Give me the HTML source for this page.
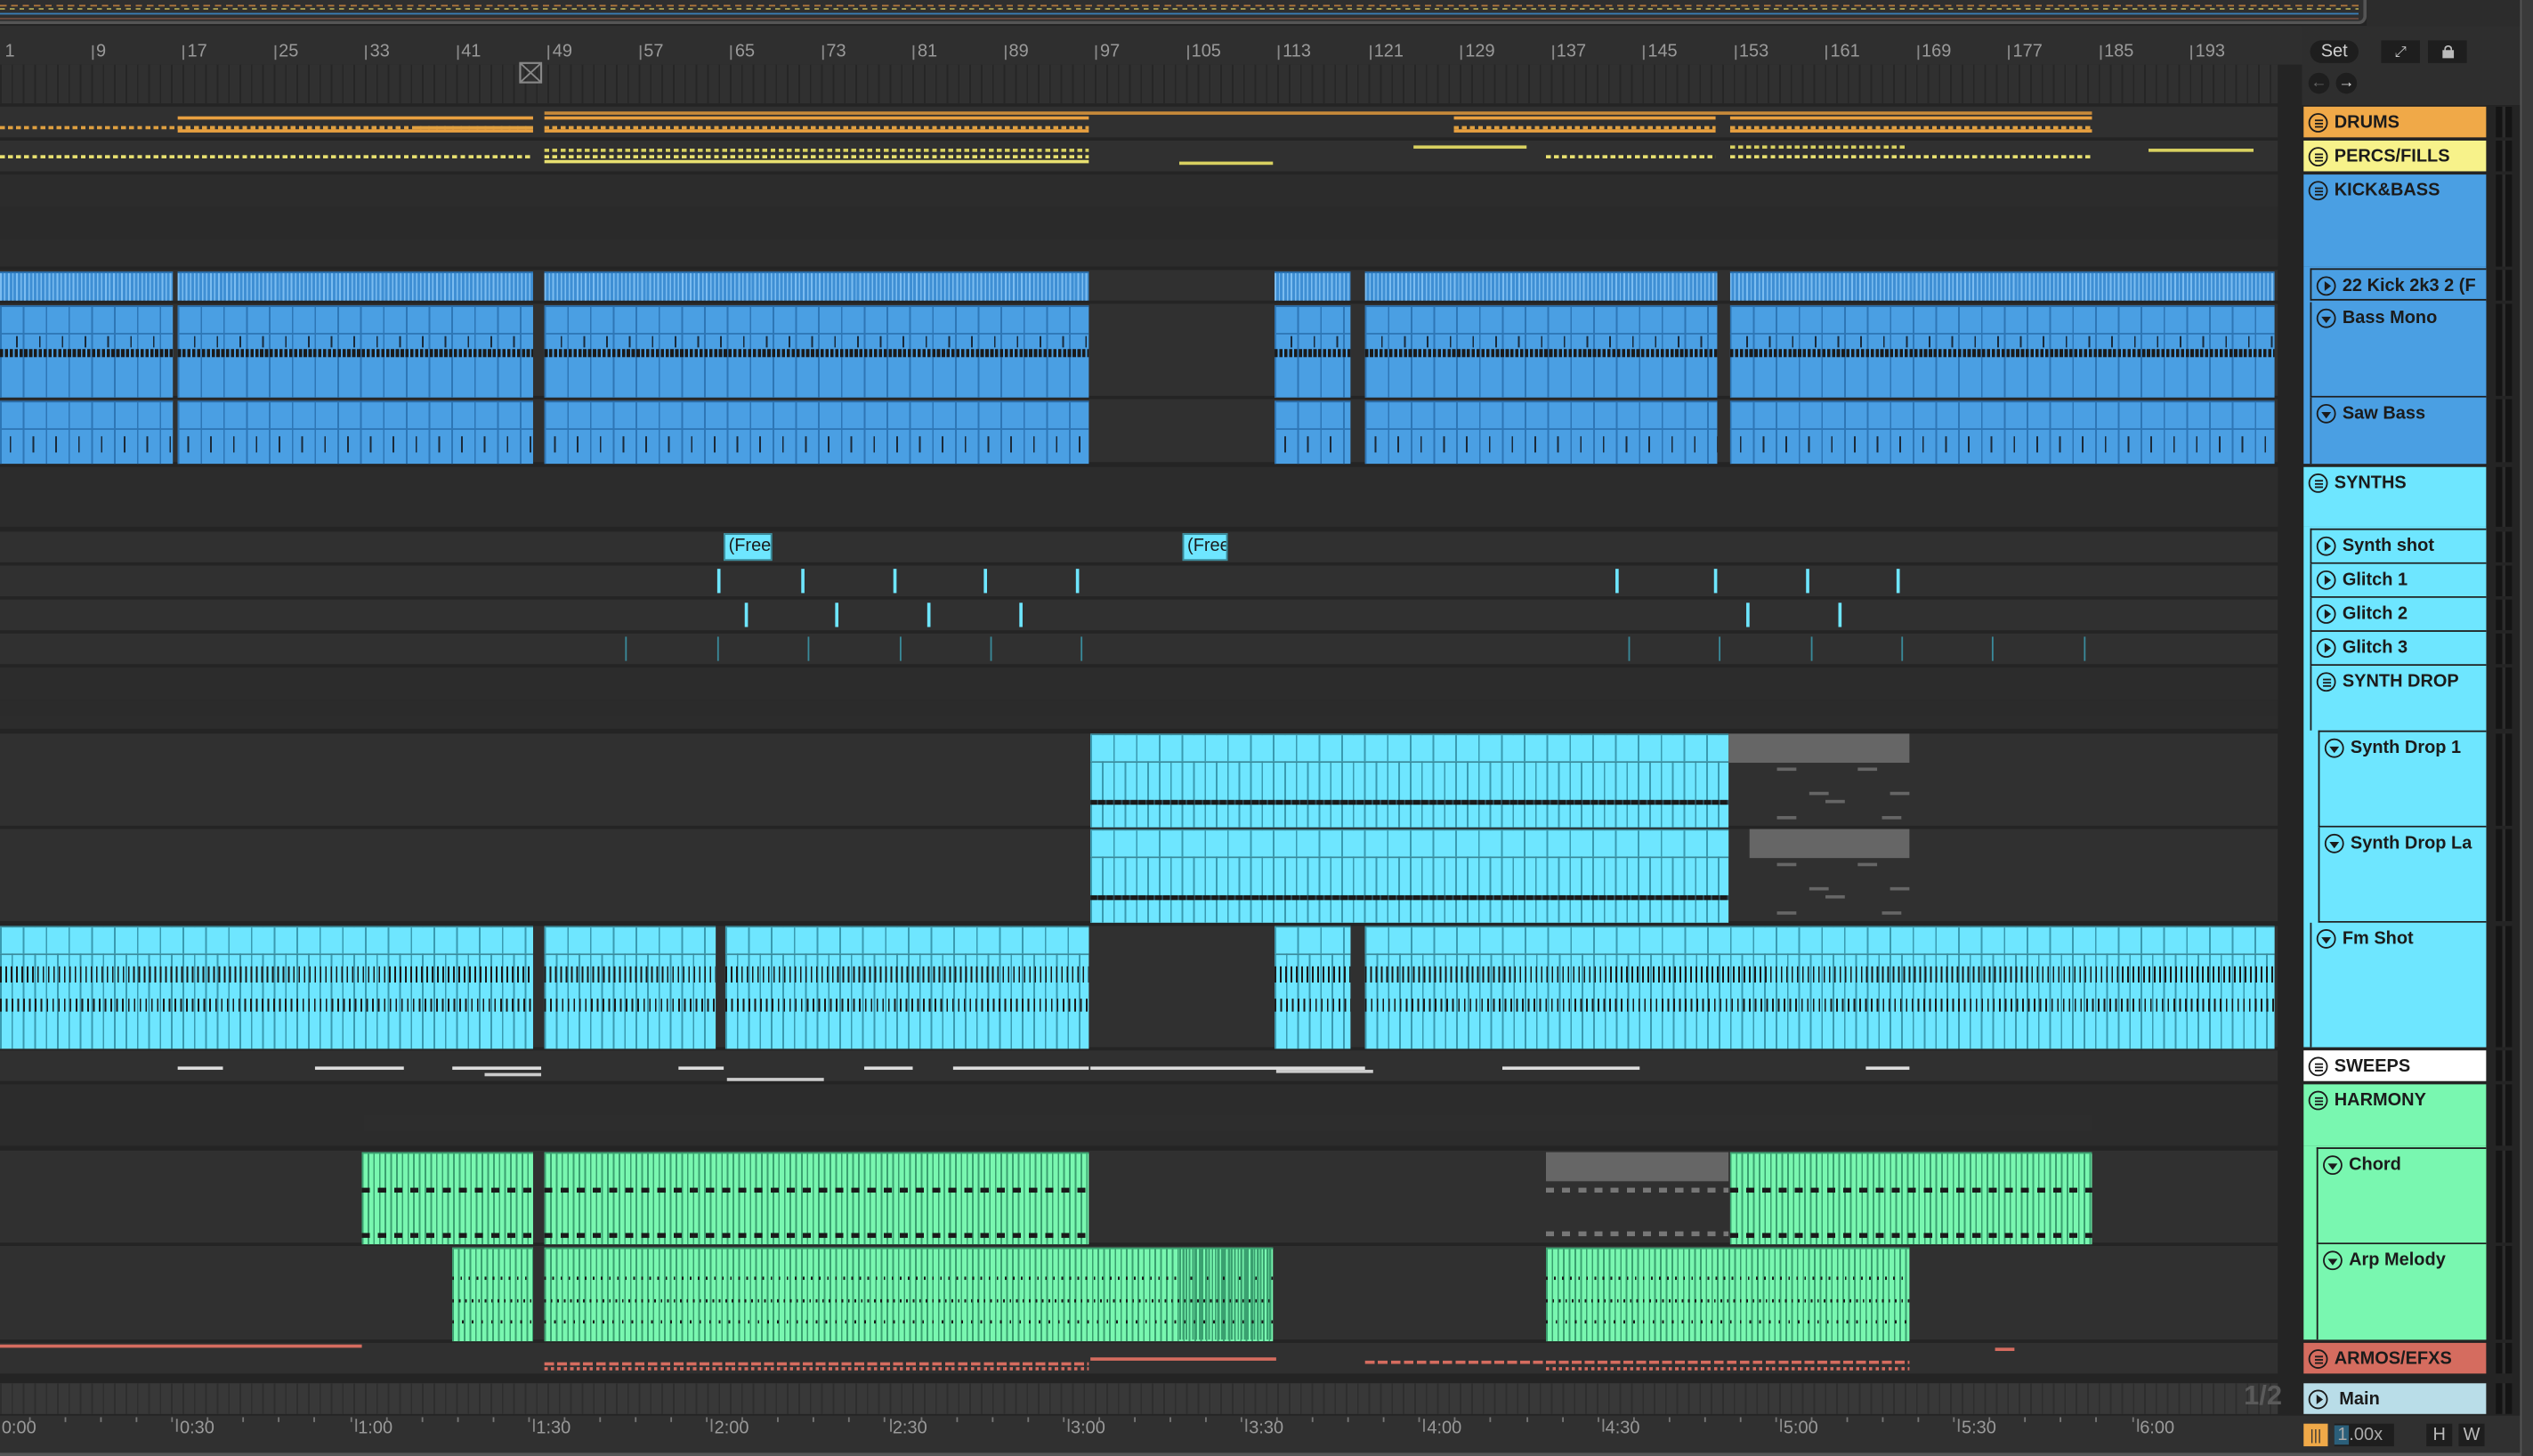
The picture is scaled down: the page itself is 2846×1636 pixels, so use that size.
<!DOCTYPE html>
<html><head><meta charset="utf-8">
<style>
html,body{margin:0;padding:0;background:#242424;overflow:hidden}
#root{position:absolute;left:0;top:0;width:1568px;height:901px;transform:scale(1.81505,1.81576);transform-origin:0 0;background:#242424;font-family:"Liberation Sans",sans-serif}
.abs{position:absolute}
.lane{position:absolute;left:0;width:1410px;background-color:#303030;background-image:repeating-linear-gradient(90deg,#262626 0 1px,transparent 1px 7.06px)}
.hd{position:absolute;left:1426px;width:113px;color:#1b1b1b;font-weight:bold;font-size:11px;line-height:20px;white-space:nowrap;overflow:hidden;box-sizing:border-box}
.hd .ic{display:inline-block;width:12px;height:12px;border:1.3px solid #1b1b1b;border-radius:50%;vertical-align:-3px;margin:0 4px 0 3px;position:relative;box-sizing:border-box}
.ic.g::after{content:"";position:absolute;left:2.5px;top:2.5px;width:5px;height:1px;background:#1b1b1b;box-shadow:0 2px 0 #1b1b1b,0 4px 0 #1b1b1b}
.ic.p::after{content:"";position:absolute;left:3.5px;top:2px;border-left:4.5px solid #1b1b1b;border-top:3px solid transparent;border-bottom:3px solid transparent}
.ic.v::after{content:"";position:absolute;left:2px;top:3.5px;border-top:4.5px solid #1b1b1b;border-left:3px solid transparent;border-right:3px solid transparent}
</style></head><body><div id="root">
<div class="abs" style="left:0;top:0;width:1463px;height:13px;background:#2f2f2f;border-bottom:2px solid #555;border-right:2px solid #555;border-radius:0 0 5px 0"></div>
<div class="abs" style="left:0;top:3px;width:1460px;height:1px;background:repeating-linear-gradient(90deg,#b0763c 0 4px,transparent 4px 7px)"></div>
<div class="abs" style="left:0;top:5px;width:1460px;height:1px;background:repeating-linear-gradient(90deg,#a8a050 0 3px,transparent 3px 6px)"></div>
<div class="abs" style="left:0;top:8px;width:1460px;height:1px;background:#3a7fb8"></div>
<div class="abs" style="left:0;top:11px;width:1460px;height:1px;background:#6a4a40"></div>
<div class="abs" style="left:1465px;top:0;width:95px;height:16px;background:#2c2c2c"></div>
<div class="abs" style="left:1560px;top:0;width:8px;height:901px;background:#3a3a3a;border-left:1px solid #555"></div>
<div class="abs" style="left:0;top:16px;width:1425px;height:24px;background:#2f2f2f"></div>
<div class="abs" style="left:1425px;top:16px;width:135px;height:49px;background:#2e2e2e"></div>
<div class="abs" style="left:1430px;top:25px;width:30px;height:14px;border-radius:7px;background:#1e1e1e;color:#cfcfcf;font-size:11px;text-align:center;line-height:14px">Set</div>
<div class="abs" style="left:1474px;top:25px;width:24px;height:14px;background:#1e1e1e;color:#ccc;font-size:9px;text-align:center;line-height:14px">⤢</div>
<div class="abs" style="left:1503px;top:25px;width:24px;height:14px;background:#1e1e1e"><div class="abs" style="left:9px;top:6px;width:7px;height:5px;background:#bbb"></div><div class="abs" style="left:10px;top:3px;width:3px;height:3px;border:1px solid #bbb;border-bottom:none;border-radius:3px 3px 0 0"></div></div>
<div class="abs" style="left:1429px;top:45px;width:13px;height:13px;border-radius:50%;background:#1e1e1e;color:#666;font-size:10px;line-height:13px;text-align:center">←</div>
<div class="abs" style="left:1446px;top:45px;width:13px;height:13px;border-radius:50%;background:#1e1e1e;color:#ddd;font-size:10px;line-height:13px;text-align:center">→</div>
<div class="lane" style="top:40px;height:24px"></div>
<svg class="abs" style="left:321px;top:38px" width="15" height="14"><rect x="1" y="1" width="13" height="12" fill="none" stroke="#888" stroke-width="1.2"/><path d="M1 1L14 13M14 1L1 13" stroke="#888" stroke-width="1"/></svg>
<div class="abs" style="left:0;top:876px;width:1560px;height:25px;background:#303030"></div>
<div class="abs" style="left:0;top:899px;width:1560px;height:2px;background:#555"></div>
<div id="hdrs">
<div class="hd" style="top:66px;height:19px;background:#f0a948"><span class="ic g"></span>DRUMS</div>
<div class="hd" style="top:87px;height:19px;background:#f7f28a"><span class="ic g"></span>PERCS/FILLS</div>
<div class="hd" style="top:108px;height:57px;background:#4a9fe3"><span class="ic g"></span>KICK&amp;BASS</div>
<div class="abs" style="left:1426px;top:165px;width:113px;height:122px;background:#4a9fe3"></div>
<div class="hd" style="left:1430px;width:109px;top:166px;height:20px;background:#4a9fe3;border-left:1.5px solid #1e1e1e;border-top:1.5px solid #1e1e1e;border-bottom:1.5px solid #1e1e1e"><span class="ic p"></span>22 Kick 2k3 2 (F</div>
<div class="hd" style="left:1430px;width:109px;top:187px;height:59px;background:#4a9fe3;border-left:1.5px solid #1e1e1e;border-bottom:1.5px solid #1e1e1e"><span class="ic v"></span>Bass Mono</div>
<div class="hd" style="left:1430px;width:109px;top:246px;height:41px;background:#4a9fe3;border-left:1.5px solid #1e1e1e"><span class="ic v"></span>Saw Bass</div>
<div class="hd" style="top:289px;height:37px;background:#6ee6ff"><span class="ic g"></span>SYNTHS</div>
<div class="abs" style="left:1426px;top:326px;width:113px;height:322px;background:#6ee6ff"></div>
<div class="hd" style="left:1430px;width:109px;top:327px;height:22px;background:#6ee6ff;border-left:1.5px solid #1e1e1e;border-top:1.5px solid #1e1e1e;border-bottom:1.5px solid #1e1e1e"><span class="ic p"></span>Synth shot</div>
<div class="hd" style="left:1430px;width:109px;top:349px;height:21px;background:#6ee6ff;border-left:1.5px solid #1e1e1e;border-bottom:1.5px solid #1e1e1e"><span class="ic p"></span>Glitch 1</div>
<div class="hd" style="left:1430px;width:109px;top:370px;height:21px;background:#6ee6ff;border-left:1.5px solid #1e1e1e;border-bottom:1.5px solid #1e1e1e"><span class="ic p"></span>Glitch 2</div>
<div class="hd" style="left:1430px;width:109px;top:391px;height:21px;background:#6ee6ff;border-left:1.5px solid #1e1e1e;border-bottom:1.5px solid #1e1e1e"><span class="ic p"></span>Glitch 3</div>
<div class="hd" style="left:1430px;width:109px;top:412px;height:40px;background:#6ee6ff;border-left:1.5px solid #1e1e1e"><span class="ic g"></span>SYNTH DROP</div>
<div class="hd" style="left:1435px;width:104px;top:452px;height:60px;background:#6ee6ff;border-left:1.5px solid #1e1e1e;border-top:1.5px solid #1e1e1e;border-bottom:1.5px solid #1e1e1e"><span class="ic v"></span>Synth Drop 1</div>
<div class="hd" style="left:1435px;width:104px;top:512px;height:59px;background:#6ee6ff;border-left:1.5px solid #1e1e1e;border-bottom:1.5px solid #1e1e1e"><span class="ic v"></span>Synth Drop La</div>
<div class="hd" style="left:1430px;width:109px;top:571px;height:77px;background:#6ee6ff;border-left:1.5px solid #1e1e1e"><span class="ic v"></span>Fm Shot</div>
<div class="hd" style="top:650px;height:19px;background:#ffffff"><span class="ic g"></span>SWEEPS</div>
<div class="hd" style="top:671px;height:38px;background:#79f7b0"><span class="ic g"></span>HARMONY</div>
<div class="abs" style="left:1426px;top:709px;width:113px;height:120px;background:#79f7b0"></div>
<div class="hd" style="left:1434px;width:105px;top:710px;height:60px;background:#79f7b0;border-left:1.5px solid #1e1e1e;border-top:1.5px solid #1e1e1e;border-bottom:1.5px solid #1e1e1e"><span class="ic v"></span>Chord</div>
<div class="hd" style="left:1434px;width:105px;top:770px;height:59px;background:#79f7b0;border-left:1.5px solid #1e1e1e"><span class="ic v"></span>Arp Melody</div>
<div class="hd" style="top:831px;height:19px;background:#d56c5f"><span class="ic g"></span>ARMOS/EFXS</div>
<div class="hd" style="top:856px;height:19px;background:#b9dde8"><span class="ic p"></span> Main</div>
</div>
<div class="abs" style="left:1389px;top:854px;font-size:17px;font-weight:bold;color:#5a5a5a">1/2</div>
<div class="abs" style="left:1426px;top:881px;width:15px;height:14px;background:#f0a948;color:#333;font-size:9px;text-align:center;line-height:14px">|||</div>
<div class="abs" style="left:1445px;top:881px;width:37px;height:14px;background:#1e1e1e;color:#aaa;font-size:11px;line-height:14px"><span style="background:#2b5f7a;padding:0 1px 0 2px">1</span>.00x</div>
<div class="abs" style="left:1502px;top:881px;width:16px;height:14px;background:#1e1e1e;color:#bbb;font-size:11px;text-align:center;line-height:14px">H</div>
<div class="abs" style="left:1522px;top:881px;width:16px;height:14px;background:#1e1e1e;color:#bbb;font-size:11px;text-align:center;line-height:14px">W</div>
<script>
var R=document.getElementById('root');var H=document.getElementById('hdrs');
function d(l,t,w,h,bg,ex,app){var e=document.createElement('div');e.className='abs';e.style.cssText='left:'+l+'px;top:'+t+'px;width:'+w+'px;height:'+h+'px;background:'+bg+';'+(ex||'');if(app)R.appendChild(e);else R.insertBefore(e,H);return e;}
var nums=[1,9,17,25,33,41,49,57,65,73,81,89,97,105,113,121,129,137,145,153,161,169,177,185,193];
nums.forEach(function(n,i){var x=i*56.5;var e=d(x+3,26,30,14,'transparent','font-size:11px;color:#9a9a9a');e.textContent=n;if(i>0)d(x,28,1,9,'#888');});
var rows=[[66,19,0],[87,19,0],[108,57,1],[167,19,0],[188,57,0],[247,39,0],[289,37,1],[329,19,0],[350,19,0],[371,19,0],[392,19,0],[413,38,1],[454,57,0],[513,57,0],[573,75,0],[650,19,0],[671,38,1],[712,57,0],[771,58,0],[831,19,0],[856,19,0]];
rows.forEach(function(r){var e=d(0,r[0],1410,r[1],'#303030');e.className='lane abs';if(r[2])e.style.backgroundColor='#2c2c2c';
 d(1545,r[0],10,r[1],'repeating-linear-gradient(90deg,#141414 0 4px,#2c2c2c 4px 6px,#141414 6px 10px)');});
d(0,856,1410,19,'#383838','background-image:repeating-linear-gradient(90deg,#2e2e2e 0 1px,transparent 1px 7.06px)');
d(0,128,1410,20,'#2a2a2a');d(0,433,1410,10,'#2b2b2b');d(225,690,1070,10,'#2d2d2d');
function lines(y,x1,x2,col,dash){d(x1,y,x2-x1,1.5,dash?'repeating-linear-gradient(90deg,'+col+' 0 3px,transparent 3px 5px)':col);}
[[0,240],[258,330]].forEach(function(s){lines(78,s[0],s[1],'#e0a040',1);});
[[110,330],[337,674],[900,1062],[1071,1295]].forEach(function(s){lines(72,s[0],s[1],'#e8a040');lines(78,s[0],s[1],'#e0a040',1);lines(80,s[0],s[1],'#e8a040');});
lines(69,337,1295,'#c78a3a');
[[0,330],[337,674],[957,1062],[1071,1295]].forEach(function(s){lines(96,s[0],s[1],'#e8e070',1);});
lines(99,337,674,'#e8e070');lines(92,337,674,'#d8d060',1);lines(100,730,788,'#d8d060');lines(90,875,945,'#d8d060');lines(92,1330,1395,'#d8d060');lines(90,1071,1180,'#d8d060',1);
var bl=[[0,107],[110,330],[337,674],[789,836],[845,1063],[1071,1408]];
bl.forEach(function(s){var w=s[1]-s[0];
 d(s[0],168,w,17,'#3f8fd4','background-image:repeating-linear-gradient(90deg,#7bbcf0 0 1px,transparent 1px 2.6px,#7bbcf0 2.6px 3.4px,transparent 3.4px 5px);border-top:1px solid #2a6ca8');
 d(s[0],189,w,56,'#4a9fe3','background-image:repeating-linear-gradient(90deg,#2e76b5 0 1px,transparent 1px 14.12px);border-top:1px solid #2a6ca8');
 d(s[0],206,w,1,'#2e76b5');
 d(s[0],216,w,5,'repeating-linear-gradient(90deg,#1a1a1a 0 2px,transparent 2px 3px,#1a1a1a 3px 5px,transparent 5px 6px)');
 d(s[0],208,w,7,'repeating-linear-gradient(90deg,transparent 0 10px,#1a2a3a 10px 11px,transparent 11px 14.12px)');
 d(s[0],248,w,38,'#4a9fe3','background-image:repeating-linear-gradient(90deg,#2e76b5 0 1px,transparent 1px 14.12px);border-top:1px solid #2a6ca8');
 d(s[0],265,w,1,'#2e76b5');
 d(s[0],270,w,10,'repeating-linear-gradient(90deg,transparent 0 6px,#1a2a3a 6px 7px,transparent 7px 14.12px)');
});
[[448,478],[732,760]].forEach(function(s){var e=d(s[0],330,s[1]-s[0],17,'#6ee6ff','border:1px solid #3a8a9a;box-sizing:border-box;font-size:11px;color:#1b1b1b;line-height:15px;padding-left:2px;overflow:hidden');e.textContent='(Free';});
[444,496,553,609,666,1000,1061,1118,1174].forEach(function(x){d(x,352,2,15,'#6ee6ff');});
[461,517,574,631,1081,1138].forEach(function(x){d(x,373,2,15,'#6ee6ff');});
[387,444,500,557,613,669,1008,1064,1121,1177,1233,1290].forEach(function(x){d(x,394,1,15,'#3a8a9a');});
function cy(x1,x2,y,h,hh,mid){var w=x2-x1;d(x1,y,w,h,'#6ee6ff','background-image:repeating-linear-gradient(90deg,#3a9ab0 0 1px,transparent 1px 7.06px);border-top:1px solid #3a8a9a');d(x1,y+hh,w,1,'#3a8a9a');d(x1,y+1,w,hh-1,'#6ee6ff','background-image:repeating-linear-gradient(90deg,#3a9ab0 0 1px,transparent 1px 14.12px)');if(mid)d(x1,y+mid,w,3,'repeating-linear-gradient(90deg,#1a1a1a 0 4px,#2a4a55 4px 5px)');}
cy(675,1070,454,57,17,41);cy(675,1070,513,57,17,41);
d(1070,454,112,18,'#666');d(1083,513,99,18,'#666');
[[1100,475],[1120,490],[1150,475],[1130,495],[1100,505],[1165,505],[1170,490]].forEach(function(p){d(p[0],p[1],12,2,'#666');d(p[0],p[1]+59,12,2,'#666');});
[[0,330],[337,443],[449,674],[789,836],[845,1408]].forEach(function(s){cy(s[0],s[1],573,75,17,0);d(s[0],598,s[1]-s[0],10,'repeating-linear-gradient(90deg,#1a1a1a 0 1px,transparent 1px 3.3px)');d(s[0],618,s[1]-s[0],8,'repeating-linear-gradient(90deg,#1a1a1a 0 1px,transparent 1px 3.6px)');});
[[110,138],[195,250],[280,335],[420,448],[535,565],[590,674],[675,845],[930,1015],[1155,1182]].forEach(function(s){d(s[0],660,s[1]-s[0],1.5,'#ddd');});
d(300,664,35,2,'#ccc');d(450,667,60,1.5,'#ccc');d(790,662,60,1.5,'#ccc');
function gr(x1,x2,y,h,dots){var w=x2-x1;d(x1,y,w,h,'#79f7b0','background-image:repeating-linear-gradient(90deg,#3aa070 0 1px,transparent 1px 3.53px);border-top:1px solid #3aa070');
 if(!dots){d(x1,y+22,w,3,'repeating-linear-gradient(90deg,#1a1a1a 0 5px,transparent 5px 10px)');d(x1,y+50,w,3,'repeating-linear-gradient(90deg,#1a1a1a 0 5px,transparent 5px 10px)');}
 else{d(x1,y+18,w,2,'repeating-linear-gradient(90deg,#1a1a1a 0 1px,transparent 1px 5px)');d(x1,y+32,w,2,'repeating-linear-gradient(90deg,#1a1a1a 0 1px,transparent 1px 4px)');d(x1,y+45,w,2,'repeating-linear-gradient(90deg,#1a1a1a 0 1px,transparent 1px 6px)');}}
gr(224,330,713,56);gr(337,674,713,56);gr(1071,1295,713,56);
d(957,713,113,18,'#666');d(957,735,113,3,'repeating-linear-gradient(90deg,#777 0 5px,transparent 5px 10px)');d(957,762,113,3,'repeating-linear-gradient(90deg,#777 0 5px,transparent 5px 10px)');
gr(280,330,772,57,1);gr(337,788,772,57,1);gr(957,1182,772,57,1);
d(730,772,58,57,'repeating-linear-gradient(90deg,#3aa070 0 1px,transparent 1px 2px)');
d(0,832,224,1.5,'#d56c5f');
d(337,843,337,1.5,'repeating-linear-gradient(90deg,#d56c5f 0 6px,transparent 6px 8px)');d(337,846,337,1.5,'repeating-linear-gradient(90deg,#d56c5f 0 2px,transparent 2px 4px)');
d(675,840,115,1.5,'#d56c5f');d(845,842,337,1.5,'repeating-linear-gradient(90deg,#d56c5f 0 6px,transparent 6px 8px)');d(957,846,225,1.5,'repeating-linear-gradient(90deg,#d56c5f 0 2px,transparent 2px 4px)');d(1235,834,12,2,'#d56c5f');
['0:00','0:30','1:00','1:30','2:00','2:30','3:00','3:30','4:00','4:30','5:00','5:30','6:00'].forEach(function(t,i){var x=i*110.3;var e=d(x+1,878,40,14,'transparent','font-size:11px;color:#9a9a9a',1);e.textContent=t;if(i>0)d(x-1,878,1,8,'#888','',1);});
for(var i=0;i<60;i++)d(i*22.06+18,877,1,3,'#777','',1);
</script>
</div></body></html>
